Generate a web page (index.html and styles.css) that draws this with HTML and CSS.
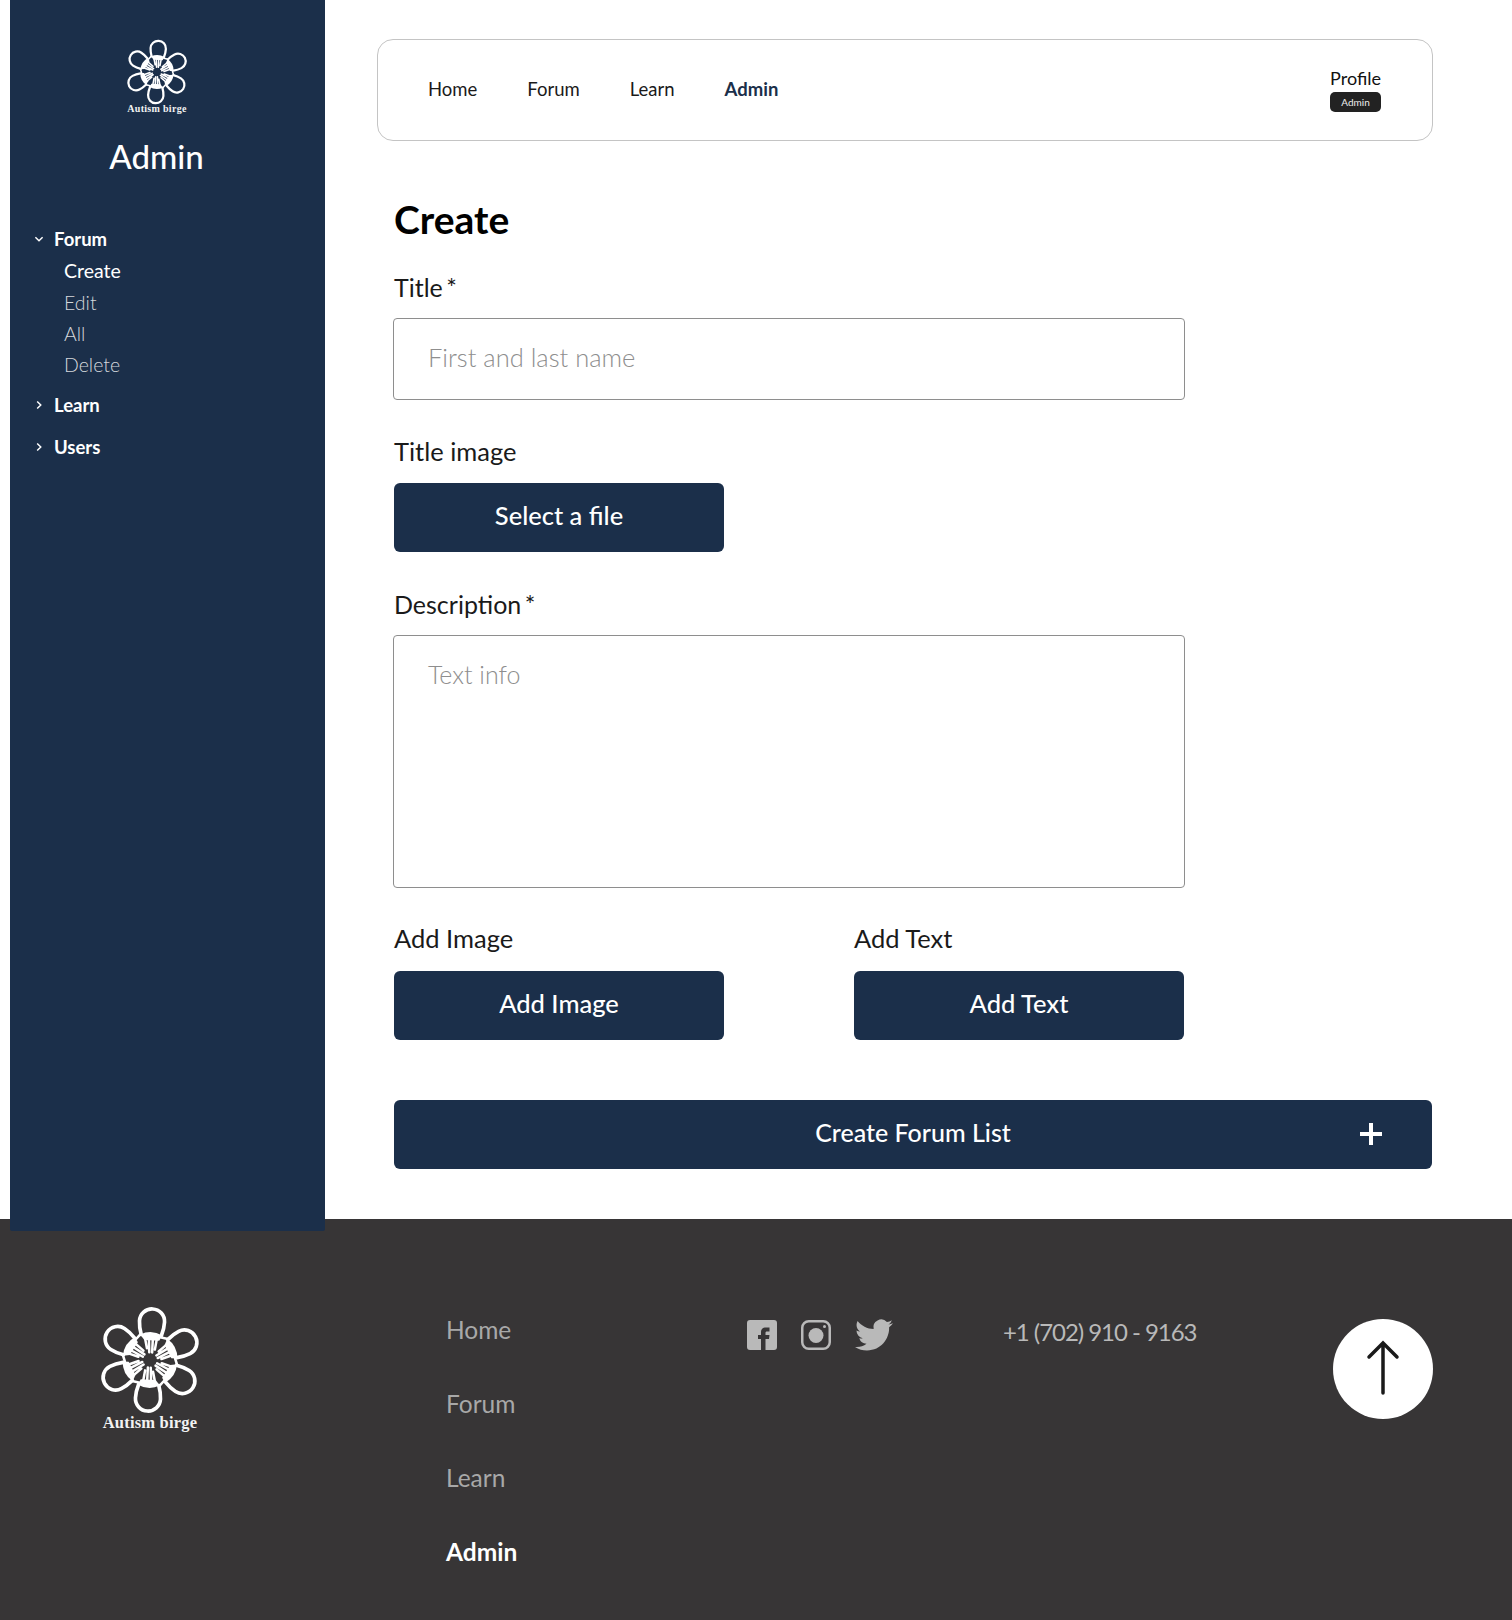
FILE: index.html
```html
<!DOCTYPE html>
<html lang="en">
<head>
<meta charset="utf-8">
<title>Admin - Create</title>
<link rel="stylesheet" href="styles.css">
</head>
<body>
<svg class="defs" width="0" height="0" aria-hidden="true">
  <defs>
    <g id="petal">
      <path class="ring" d="M-10.500-26C-12.500-32-13-36-13-40A13 13 0 0 1 13-40C13-36 12.500-32 10.500-26"/>
      <path class="palm" d="M-11.500-26Q0-32 11.500-26L8.500-20.500L-7-20.500Z"/>
      <path class="thumb" d="M-11-26.500L-15.500-21"/>
      <path class="finger" d="M-6-21L-3.800-12M-2.200-21L-1.200-8M1.800-21L1.800-8M5.800-21L4.500-11"/>
    </g>
    <g id="flower">
      <use href="#petal" transform="rotate(3)"/>
      <use href="#petal" transform="rotate(63)"/>
      <use href="#petal" transform="rotate(123)"/>
      <use href="#petal" transform="rotate(183)"/>
      <use href="#petal" transform="rotate(243)"/>
      <use href="#petal" transform="rotate(303)"/>
    </g>
  </defs>
</svg>
<div class="page">
  <aside class="sidebar">
    <div class="brand brand-small">
      <svg class="flower" viewBox="-56 -56 112 112"><use href="#flower"/></svg>
      <span class="brand-text">Autism birge</span>
    </div>
    <h2 class="side-title">Admin</h2>
    <nav class="tree">
      <div class="tree-head tree-first">
        <svg class="chev" viewBox="0 0 10 10"><path d="M2 3.500L5 6.500L8 3.500"/></svg>
        <span>Forum</span>
      </div>
      <a class="tree-item tree-active">Create</a>
      <a class="tree-item tree-edit">Edit</a>
      <a class="tree-item">All</a>
      <a class="tree-item">Delete</a>
      <div class="tree-head tree-next">
        <svg class="chev" viewBox="0 0 10 10"><path d="M3.500 2L6.500 5L3.500 8"/></svg>
        <span>Learn</span>
      </div>
      <div class="tree-head tree-last">
        <svg class="chev" viewBox="0 0 10 10"><path d="M3.500 2L6.500 5L3.500 8"/></svg>
        <span>Users</span>
      </div>
    </nav>
  </aside>
  <main class="content">
    <header class="topbar">
      <nav class="topnav">
        <a>Home</a>
        <a>Forum</a>
        <a>Learn</a>
        <a class="topnav-active">Admin</a>
      </nav>
      <div class="profile">
        <span>Profile</span>
        <span class="badge">Admin</span>
      </div>
    </header>
    <form class="form">
      <h1 class="form-title">Create</h1>
      <label class="label label-title label-req">Title *</label>
      <div class="field field-input">First and last name</div>
      <label class="label label-image">Title image</label>
      <button type="button" class="btn btn-file">Select a file</button>
      <label class="label label-desc label-req">Description *</label>
      <div class="field field-area">Text info</div>
      <div class="add-row">
        <div class="add-col">
          <label class="label">Add Image</label>
          <button type="button" class="btn btn-add">Add Image</button>
        </div>
        <div class="add-col">
          <label class="label">Add Text</label>
          <button type="button" class="btn btn-add">Add Text</button>
        </div>
      </div>
      <button type="button" class="btn btn-wide">
        <span>Create Forum List</span>
        <svg class="plus" viewBox="0 0 22 22"><path d="M11 0V22M0 11H22"/></svg>
      </button>
    </form>
  </main>
</div>
<footer class="footer">
  <div class="brand brand-large">
    <svg class="flower" viewBox="-56 -56 112 112"><use href="#flower"/></svg>
    <span class="brand-text">Autism birge</span>
  </div>
  <nav class="foot-nav">
    <a>Home</a>
    <a>Forum</a>
    <a>Learn</a>
    <a class="foot-active">Admin</a>
  </nav>
  <div class="social">
    <svg class="ic-fb" viewBox="0 0 30 30"><path fill-rule="evenodd" d="M3 0H27A3 3 0 0 1 30 3V27A3 3 0 0 1 27 30H3A3 3 0 0 1 0 27V3A3 3 0 0 1 3 0ZM14 30V19H11V15H14V12C14 9 16 7.500 19 7.500H22.500V11.500H20C18.800 11.500 18.500 12 18.500 13V15H22.500L22 19H18.500V30Z"/></svg>
    <svg class="ic-ig" viewBox="0 0 30 30"><rect class="ig-frame" x="1.250" y="1.250" width="27.500" height="27.500" rx="6.500"/><circle class="ig-dot" cx="15" cy="15.500" r="7.500"/><circle class="ig-dot" cx="23.500" cy="6.500" r="1.500"/></svg>
    <svg class="ic-tw" viewBox="0 0 24 24"><path d="M23.953 4.57a10 10 0 01-2.825.775 4.958 4.958 0 002.163-2.723c-.951.555-2.005.959-3.127 1.184a4.92 4.92 0 00-8.384 4.482C7.69 8.095 4.067 6.13 1.64 3.162a4.822 4.822 0 00-.666 2.475c0 1.71.87 3.213 2.188 4.096a4.904 4.904 0 01-2.228-.616v.06a4.923 4.923 0 003.946 4.827 4.996 4.996 0 01-2.212.085 4.936 4.936 0 004.604 3.417 9.867 9.867 0 01-6.102 2.105c-.39 0-.779-.023-1.17-.067a13.995 13.995 0 007.557 2.209c9.053 0 13.998-7.496 13.998-13.985 0-.21 0-.42-.015-.63A9.935 9.935 0 0024 4.59z"/></svg>
  </div>
  <div class="phone">+1 (702) 910 - 9163</div>
  <a class="to-top">
    <svg viewBox="0 0 100 100"><path d="M50 74V25M36 38L50 24L64 38"/></svg>
  </a>
</footer>
</body>
</html>
```
FILE: styles.css
```css
* { box-sizing: border-box; }
html, body { margin: 0; padding: 0; }
body { font-family: "Lato", "Liberation Sans", sans-serif; background: #fff; color: #111; }
.defs { position: absolute; }
a { display: block; }

.ring { fill: none; stroke: #fff; stroke-width: 3.8; stroke-linecap: round; }
.palm { fill: #fff; }
.thumb { fill: none; stroke: #fff; stroke-width: 2.600; stroke-linecap: round; }
.finger { fill: none; stroke: #fff; stroke-width: 2.600; stroke-linecap: round; }

.page { display: flex; height: 1219px; }
.sidebar {
  flex: 0 0 315px; height: 1231px; margin-left: 10px; background: #1b2f4a;
  color: #fff; position: relative; z-index: 1; padding-top: 39px;
  border-radius: 0 0 2px 2px;
}
.brand { display: flex; flex-direction: column; align-items: center; }
.brand-text { font-family: "Liberation Serif", serif; font-weight: 700; color: #f2f2f2; white-space: nowrap; }
.brand-small { width: 60px; margin-left: 117px; }
.brand-small .flower { width: 66px; height: 66px; flex: none; }
.brand-small .brand-text { font-size: 10px; line-height: 10px; letter-spacing: .3px; margin-top: -1px; }
.side-title { margin: 22px 0 0; font-size: 33px; line-height: 40px; font-weight: 500; text-align: center; padding-right: 22px; }

.tree { margin-top: 52px; padding-left: 23px; }
.tree-head { display: flex; align-items: center; font-size: 18.500px; font-weight: 700; line-height: 22px; gap: 8px; }
.chev { width: 12px; height: 12px; fill: none; stroke: #fff; stroke-width: 1.200; margin-right: 1px; }
.tree-item { margin-left: 31px; margin-top: 9px; font-size: 19.500px; line-height: 22px; font-weight: 300; color: #d5d8dc; }
.tree-active { color: #fff; font-weight: 400; margin-top: 10px; }
.tree-edit { margin-top: 10px; }
.tree-next { margin-top: 18px; }
.tree-last { margin-top: 20px; }

.content { flex: 1; padding: 39px 0 0; position: relative; }
.topbar {
  width: 1056px; height: 102px; margin-left: 52px;
  border: 1px solid #c4c4c4; border-radius: 16px; padding: 0 51px 2px 50px;
  display: flex; align-items: center; justify-content: space-between;
}
.topnav { display: flex; gap: 50px; font-size: 18.500px; color: #1a1a1a; }
.topnav-active { color: #1b2f4a; font-weight: 700; }
.profile { display: flex; flex-direction: column; align-items: stretch; font-size: 18px; gap: 3px; text-align: center; }
.badge { background: #222; color: #eee; font-size: 10px; line-height: 20px; height: 20px; border-radius: 5px; }

.form { margin-left: 69px; padding-top: 0; }
.form-title { margin: 56px 0 0; font-size: 39px; line-height: 44px; font-weight: 700; color: #000; }
.label { display: block; font-size: 25.500px; line-height: 30px; color: #1a1a1a; }
.label-req { word-spacing: -3px; font-size: 25px; }
.label-title { margin-top: 31px; }
.field {
  width: 792px; margin-left: -1px; margin-top: 16px; border: 1px solid #8e8e8e; border-radius: 4px;
  font-size: 25.500px; color: #8e8e8e; padding-left: 34px; font-weight: 300;
}
.field-input { height: 82px; line-height: 76px; }
.label-image { margin-top: 36px; }
.btn {
  display: block; width: 330px; height: 69px; margin-top: 16px; border: 0; border-radius: 6px;
  background: #1b2f4a; color: #fff; font: 500 25.500px "Lato", sans-serif; text-align: center; padding: 0 0 6px;
}
.btn-file { margin-top: 17px; }
.label-desc { margin-top: 37px; }
.field-area { height: 253px; margin-top: 16px; padding-top: 23px; line-height: 30px; font-size: 25px; }
.add-row { display: flex; gap: 130px; margin-top: 35px; }
.add-col { width: 330px; }
.btn-add { margin-top: 18px; }
.btn-wide {
  width: 1038px; margin-top: 60px; display: flex; align-items: center; justify-content: center;
  position: relative; font-size: 25px;
}
.plus { position: absolute; right: 50px; top: 23px; width: 22px; height: 22px; fill: none; stroke: #fff; stroke-width: 4; }

.footer {
  height: 401px; background: #373536; position: relative;
  display: flex; align-items: flex-start; padding: 86px 0 0 99px; color: #b9b9b9;
}
.brand-large { width: 102px; margin-top: 1px; }
.brand-large .flower { width: 108px; height: 108px; flex: none; }
.brand-large .brand-text { font-size: 16.500px; line-height: 18px; letter-spacing: .2px; }
.foot-nav { width: 75px; margin-left: 245px; margin-top: 10px; display: flex; flex-direction: column; gap: 44px; font-size: 24.500px; line-height: 30px; color: #a8a8a8; font-weight: 400; }
.foot-active { color: #fff; font-weight: 700; }
.social { margin-left: 226px; margin-top: 11px; display: flex; align-items: center; gap: 24px; }
.ic-fb { width: 30px; height: 30px; fill: #b9b9b9; }
.ic-ig { width: 30px; height: 30px; }
.ig-frame { fill: none; stroke: #b9b9b9; stroke-width: 2.500; }
.ig-dot { fill: #b9b9b9; }
.ic-tw { width: 38px; height: 38px; fill: #b9b9b9; }
.phone { margin-left: 110px; margin-top: 12px; font-size: 24px; line-height: 30px; font-weight: 400; letter-spacing: -1.050px; }
.to-top {
  position: absolute; left: 1333px; top: 100px; width: 100px; height: 100px; border-radius: 50%; background: #fff;
}
.to-top svg { display: block; width: 100px; height: 100px; fill: none; stroke: #1a1a1a; stroke-width: 3.500; stroke-linecap: round; }
```
